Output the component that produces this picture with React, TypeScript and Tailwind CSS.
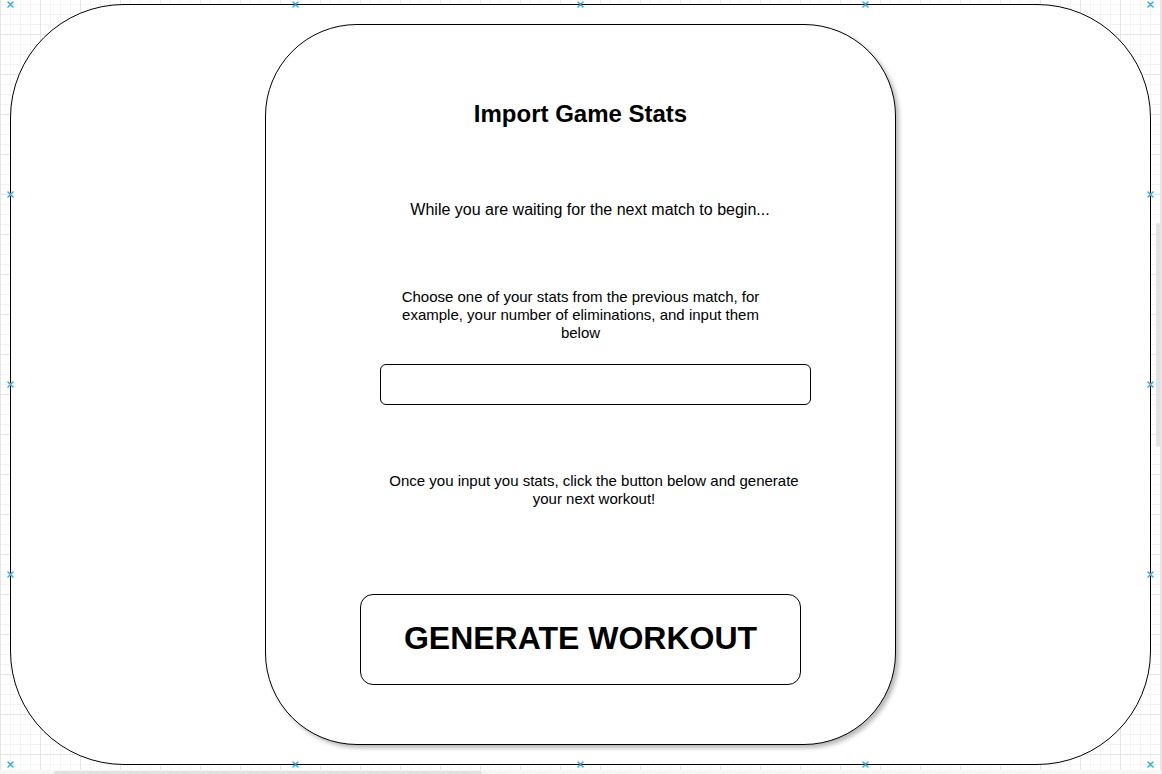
import React from "react";

const handles: [number, number][] = [
  [10, 4], [295, 4], [580, 4], [865, 4], [1150, 4],
  [10, 194], [10, 384], [10, 574],
  [1150, 194], [1150, 384], [1150, 574],
  [10, 764], [295, 764], [580, 764], [865, 764], [1150, 764],
];

function Handle({ x, y }: { x: number; y: number }) {
  return (
    <svg
      width="7"
      height="7"
      viewBox="0 0 7 7"
      className="pointer-events-none absolute"
      style={{ left: x - 3, top: y - 3 }}
    >
      <path d="M1 1L6 6M6 1L1 6" stroke="#2fb0ee" strokeWidth="1.5" strokeLinecap="round" />
    </svg>
  );
}

export default function App() {
  return (
    <div
      className="relative h-[774px] w-[1162px] overflow-hidden bg-white bg-[linear-gradient(to_right,#e6e6e6_1px,transparent_1px),linear-gradient(to_bottom,#e6e6e6_1px,transparent_1px),linear-gradient(to_right,#f4f4f4_1px,transparent_1px),linear-gradient(to_bottom,#f4f4f4_1px,transparent_1px)] bg-size-[40px_40px,40px_40px,10px_10px,10px_10px] bg-position-[0_34px,0_34px,0_4px,0_4px] pt-[4px] pl-[10px] text-black"
      style={{ fontFamily: '"Liberation Sans", Arial, Helvetica, sans-serif' }}
    >
      {/* outer canvas shape */}
      <div className="flex h-[761px] w-[1141px] flex-col rounded-[114px] border border-black bg-white">
        {/* inner card */}
        <div className="mx-auto mt-[19px] flex h-[721px] w-[631px] flex-col rounded-[92px] border border-black bg-white shadow-[3px_3px_4px_rgba(0,0,0,0.28)]">
          <h1 className="mt-[75px] text-center text-[24px] leading-[28px] font-bold">Import Game Stats</h1>

          <p className="mt-[72px] pl-[19px] text-center text-[16px] leading-[20px]">
            While you are waiting for the next match to begin...
          </p>

          <p className="mt-[68px] w-[370px] self-center text-center text-[15px] leading-[18px]">
            Choose one of your stats from the previous match, for example, your number of eliminations, and input them
            below
          </p>

          <input
            type="text"
            className="mt-[22px] ml-[114px] h-[41px] w-[431px] rounded-[6px] border border-black bg-white px-2 outline-none"
          />

          <p className="mt-[67px] ml-[118px] w-[420px] text-center text-[15px] leading-[18px]">
            Once you input you stats, click the button below and generate your next workout!
          </p>

          <button className="mt-[86px] flex h-[91px] w-[441px] items-center justify-center self-center rounded-[13px] border border-black bg-white pb-[3px] text-[32px] font-bold">
            GENERATE WORKOUT
          </button>
        </div>
      </div>

      {/* scrollbars */}
      <div className="absolute right-0 bottom-0 left-0 h-[4px] bg-[#f6f6f6]" />
      <div className="absolute bottom-0 left-[54px] h-[3px] w-[428px] rounded-full bg-[#e2e2e2]" />
      <div className="absolute top-0 right-0 bottom-0 w-px bg-[#e6e6e6]" />
      <div className="absolute top-[223px] right-[2px] h-[224px] w-[4px] rounded-full bg-[#e2e2e2]" />

      {handles.map(([x, y], i) => (
        <Handle key={i} x={x} y={y} />
      ))}
    </div>
  );
}
